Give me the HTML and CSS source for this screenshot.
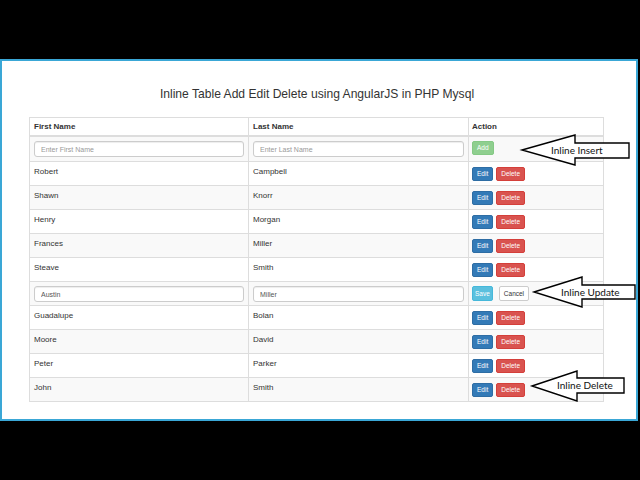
FILE: index.html
```html
<!DOCTYPE html>
<html>
<head>
<meta charset="utf-8">
<link rel="stylesheet" href="styles.css">
</head>
<body>
<div class="panel">
  <h1 class="title">Inline Table Add Edit Delete using AngularJS in PHP Mysql</h1>
  <table class="grid">
    <colgroup><col class="c1"><col class="c2"><col class="c3"></colgroup>
    <thead>
      <tr><th>First Name</th><th>Last Name</th><th class="act">Action</th></tr>
    </thead>
    <tbody>
      <tr class="form-row">
        <td><input class="field" placeholder="Enter First Name"></td>
        <td><input class="field" placeholder="Enter Last Name"></td>
        <td class="act"><button class="btn add">Add</button></td>
      </tr>
      <tr><td>Robert</td><td>Campbell</td><td class="act"><button class="btn edit">Edit</button><button class="btn del">Delete</button></td></tr>
      <tr><td>Shawn</td><td>Knorr</td><td class="act"><button class="btn edit">Edit</button><button class="btn del">Delete</button></td></tr>
      <tr><td>Henry</td><td>Morgan</td><td class="act"><button class="btn edit">Edit</button><button class="btn del">Delete</button></td></tr>
      <tr><td>Frances</td><td>Miller</td><td class="act"><button class="btn edit">Edit</button><button class="btn del">Delete</button></td></tr>
      <tr><td>Steave</td><td>Smith</td><td class="act"><button class="btn edit">Edit</button><button class="btn del">Delete</button></td></tr>
      <tr class="form-row edit-row">
        <td><input class="field" value="Austin"></td>
        <td><input class="field" value="Miller"></td>
        <td class="act"><button class="btn save">Save</button><button class="btn cancel">Cancel</button></td>
      </tr>
      <tr><td>Guadalupe</td><td>Bolan</td><td class="act"><button class="btn edit">Edit</button><button class="btn del">Delete</button></td></tr>
      <tr><td>Moore</td><td>David</td><td class="act"><button class="btn edit">Edit</button><button class="btn del">Delete</button></td></tr>
      <tr><td>Peter</td><td>Parker</td><td class="act"><button class="btn edit">Edit</button><button class="btn del">Delete</button></td></tr>
      <tr><td>John</td><td>Smith</td><td class="act"><button class="btn edit">Edit</button><button class="btn del">Delete</button></td></tr>
    </tbody>
  </table>
</div>
<svg class="callouts" width="640" height="480" viewBox="0 0 640 480">
  <polygon class="arrow" points="522,150 575,135 575,143 629,143 629,158 575,158 575,165"/>
  <text class="label" x="551" y="153.5">Inline Insert</text>
  <polygon class="arrow" points="534,292 582,277 582,285 635,285 635,299 582,299 582,307"/>
  <text class="label" x="561" y="295.5">Inline Update</text>
  <polygon class="arrow" points="532,386 577,371 577,378 624,378 624,393 577,393 577,401"/>
  <text class="label" x="557" y="389">Inline Delete</text>
</svg>
</body>
</html>
```
FILE: styles.css
```css
html, body {
  margin: 0;
  padding: 0;
  background: #000;
}
body {
  padding-top: 59px;
  position: relative;
  height: 480px;
  box-sizing: border-box;
  font-family: "Liberation Sans", Arial, sans-serif;
  color: #333;
}
.panel {
  box-sizing: border-box;
  width: 638px;
  height: 362px;
  border: 2px solid #3aa7d6;
  background: #fff;
  padding: 26px 0 0 27px;
}
.title {
  margin: 0 0 16px 0;
  width: 576px;
  text-align: center;
  font-size: 12.1px;
  line-height: 14px;
  font-weight: normal;
  color: #333;
}
.grid {
  box-sizing: border-box;
  width: 575px;
  table-layout: fixed;
  border-collapse: separate;
  border-spacing: 0;
  border-left: 1px solid #ddd;
  border-top: 1px solid #ddd;
  font-size: 8px;
}
.c1 { width: 219px; }
.c2 { width: 220px; }
.c3 { width: 135px; }
.grid th, .grid td {
  box-sizing: border-box;
  border-right: 1px solid #ddd;
  border-bottom: 1px solid #ddd;
  text-align: left;
  vertical-align: top;
  line-height: 14px;
  padding: 3px 4px 6px 4px;
}
.grid th {
  font-weight: bold;
  padding: 2px 4px 1px 4px;
  border-bottom-width: 2px;
}
.grid tbody tr:nth-child(odd) td {
  background: #f9f9f9;
}
.grid td.act, .grid th.act {
  padding-left: 3px;
}
.grid td.act {
  padding-top: 5px;
  padding-bottom: 4px;
}
.grid .form-row td {
  padding-top: 4px;
  padding-bottom: 4px;
}
.grid .edit-row td {
  padding-bottom: 3px;
}
.grid .form-row td.act {
  padding-top: 4px;
}
.field {
  box-sizing: border-box;
  display: block;
  width: 100%;
  height: 16px;
  margin: 0;
  padding: 0 6px;
  border: 1px solid #ccc;
  border-radius: 3px;
  background: #fff;
  box-shadow: inset 0 1px 1px rgba(0,0,0,.075);
  font-family: "Liberation Sans", Arial, sans-serif;
  font-size: 7px;
  color: #555;
  outline: none;
}
.field::placeholder {
  color: #999;
}
.btn {
  box-sizing: border-box;
  display: inline-block;
  vertical-align: top;
  height: 14px;
  margin: 0 3px 0 0;
  padding: 0 4px;
  border: 1px solid transparent;
  border-radius: 2px;
  font-family: "Liberation Sans", Arial, sans-serif;
  font-size: 6.5px;
  line-height: 12px;
  color: #fff;
}
.add { background: #8fcf8f; border-color: #85c985; }
.edit { background: #337ab7; border-color: #2e6da4; }
.del { background: #d9534f; border-color: #d43f3a; }
.save { background: #5bc0de; border-color: #46b8da; padding: 0 2px; margin-right: 6px; height: 15px; }
.cancel { background: #fff; border-color: #ccc; color: #333; height: 15px; }
.callouts {
  position: absolute;
  left: 0;
  top: 0;
  pointer-events: none;
}
.arrow {
  fill: #fff;
  stroke: #000;
  stroke-width: 1.4;
  stroke-linejoin: miter;
}
.label {
  font-family: Lato, "Liberation Sans", sans-serif;
  font-size: 10px;
  fill: #111;
}
```
